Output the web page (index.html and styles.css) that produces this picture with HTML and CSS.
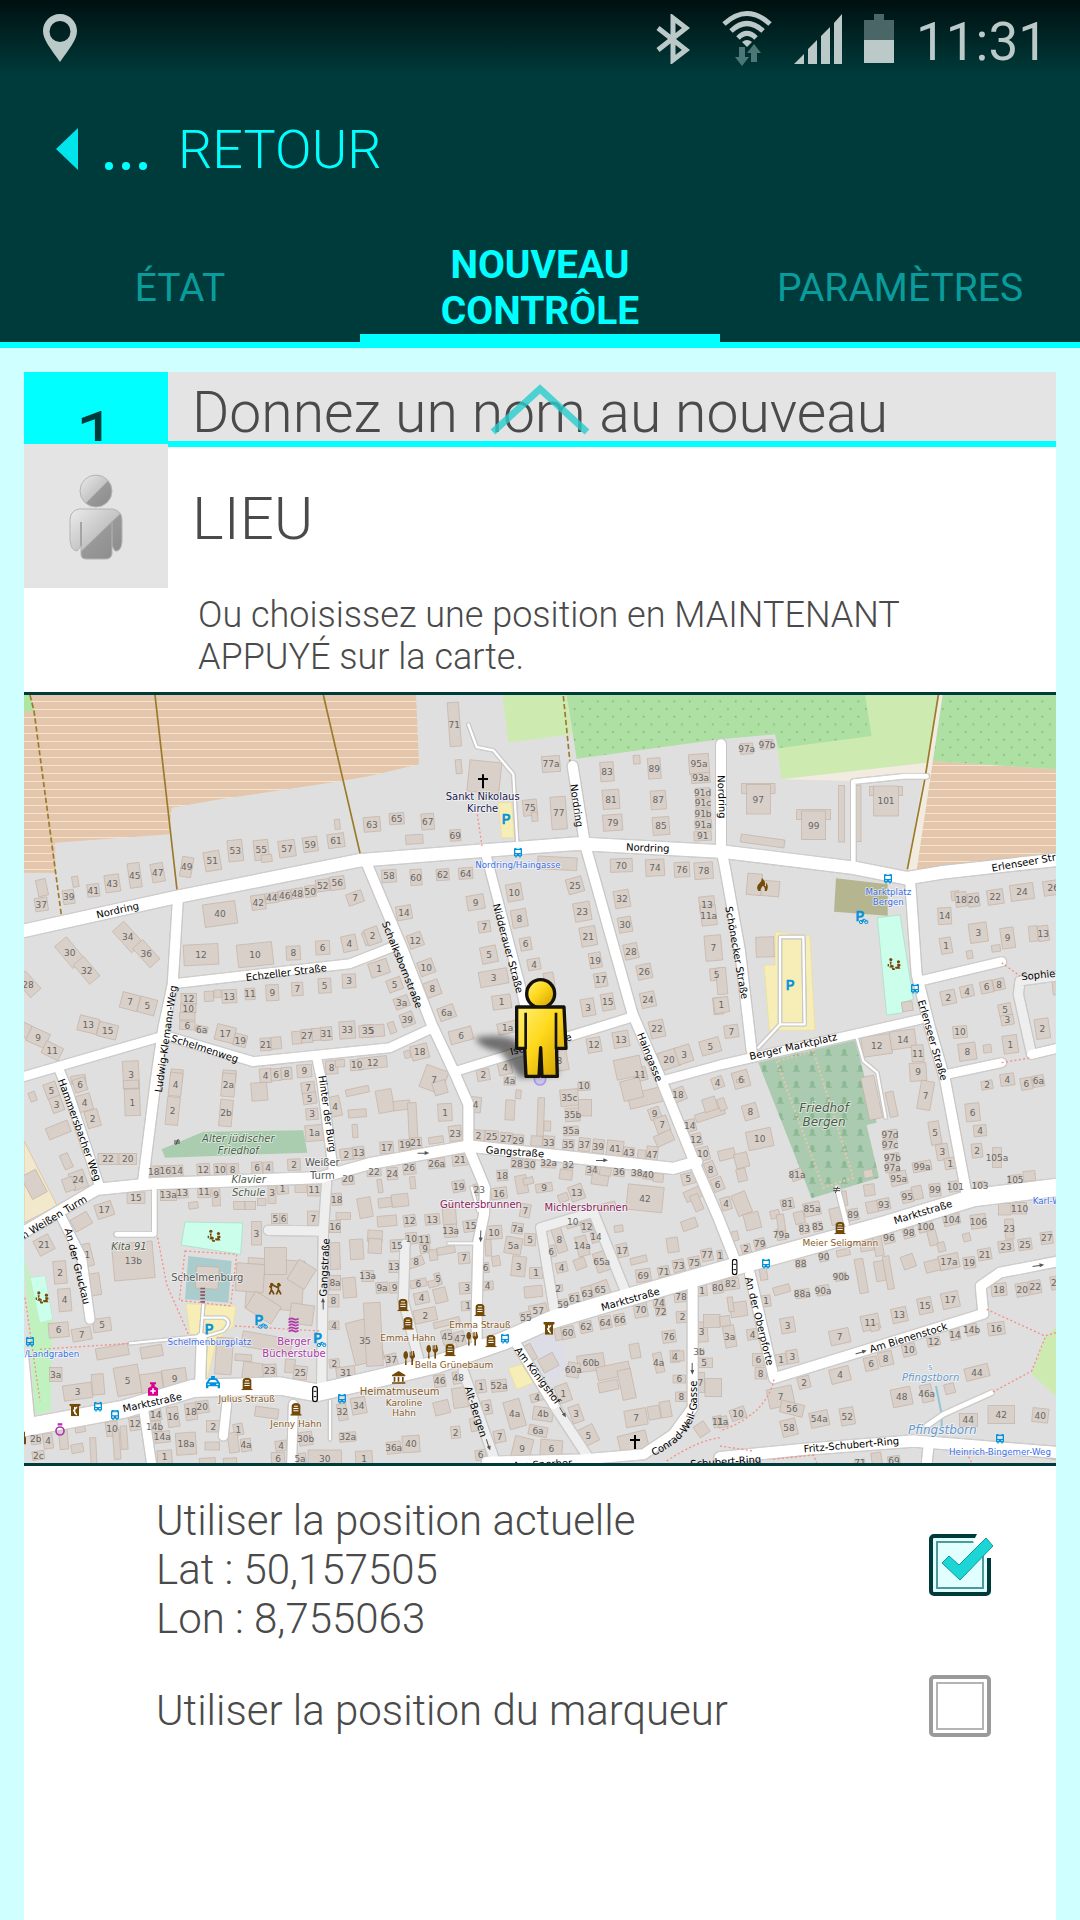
FILE: index.html
```html
<!DOCTYPE html>
<html lang="fr">
<head>
    <meta charset="UTF-8">
    <meta name="viewport" content="width=device-width, initial-scale=1.0">
    <title>Nouveau contrôle</title>
    <link rel="stylesheet" href="styles.css">
</head>
<body>
    <header class="header">
        <div class="status-bar">
            <svg class="icon-pin" viewBox="0 0 36 48" width="36" height="48"><path fill="#bcc9c9" fill-rule="evenodd" d="M18 0C8 0 1 8 1 17c0 9 8 18 17 31C27 35 35 26 35 17 35 8 28 0 18 0zm0 7a10.500 10.500 0 1 1 0 21 10.500 10.500 0 0 1 0-21z"/></svg>
            <div class="status-icons">
                <svg viewBox="0 0 34 50" width="34" height="50"><path fill="none" stroke="#bcc9c9" stroke-width="5" d="M2 14L30 36 17 46V4L30 14 2 36"/></svg>
                <svg viewBox="0 0 50 56" width="50" height="56">
                    <g fill="none" stroke="#bcc9c9" stroke-width="5"><path d="M2 14Q25-7 48 14"/><path d="M9 21Q25 6 41 21"/><path d="M16 28Q25 19 34 28"/></g>
                    <path fill="#bcc9c9" d="M20 32q5-4 10 0l-5 5z"/>
                    <path fill="#4d7676" d="M17 37h6v10h4l-7 9-7-9h4zM29 52V43h-4l7-9 7 9h-4v9z"/>
                </svg>
                <svg viewBox="0 0 48 50" width="48" height="50"><path fill="#bcc9c9" d="M0 50L10 40V50zM14 50V35l9-9V50zM27 50V22l9-9V50zM40 50V9l8-9V50z"/></svg>
                <svg viewBox="0 0 30 50" width="30" height="50"><path fill="#4a6666" d="M10 0h10v6h10v20H0V6h10z"/><path fill="#bcc9c9" d="M0 26h30v23H0z"/></svg>
                <span class="clock">11:31</span>
            </div>
        </div>
        <a class="back" href="#">
            <svg viewBox="0 0 92 42" width="92" height="42"><path fill="#00e5ec" d="M0 21L22 0V42z"/><g fill="#00ffff"><circle cx="53" cy="38" r="4"/><circle cx="70" cy="38" r="4"/><circle cx="87" cy="38" r="4"/></g></svg>
            <span>RETOUR</span>
        </a>
        <nav class="tabs">
            <a class="tab" href="#">ÉTAT</a>
            <a class="tab active" href="#">NOUVEAU CONTRÔLE</a>
            <a class="tab" href="#">PARAMÈTRES</a>
        </nav>
    </header>

    <main class="card">
        <svg class="scroll-up" viewBox="0 0 100 52" width="100" height="52"><path fill="none" stroke="#28cccc" stroke-opacity=".8" stroke-width="7" d="M3 48L50 5 97 48"/></svg>
        <section class="intro">
            <div class="side">
                <div class="step">1</div>
                <div class="person">
                    <svg viewBox="0 0 54 86" width="54" height="86">
                        <defs>
                            <linearGradient id="silver" x1="0" y1="0" x2="1" y2="1"><stop offset="0" stop-color="#ececec"/><stop offset=".52" stop-color="#c4c4c4"/><stop offset=".54" stop-color="#999"/><stop offset="1" stop-color="#8a8a8a"/></linearGradient>
                        </defs>
                        <g fill="url(#silver)" stroke="#b4b4b4" stroke-width="1">
                            <circle cx="27" cy="17" r="16"/>
                            <path d="M10 35H44Q53 37 53 46V68Q52 78 46 77L43 72V80Q42 85 37 85H17Q12 85 12 80V72L8 77Q2 77 1 66V46Q1 37 10 35z"/>
                            <path fill="none" stroke="#a5a5a5" stroke-width="2" d="M12 72V48M43 72V48"/>
                        </g>
                    </svg>
                </div>
            </div>
            <div class="texts">
                <h1 class="title">Donnez un nom au nouveau</h1>
                <h2 class="place">LIEU</h2>
                <p class="hint">Ou choisissez une position en MAINTENANT APPUYÉ sur la carte.</p>
            </div>
        </section>

        <svg class="map" viewBox="12 12 3096 2304">
            <defs>
                <pattern id="farm" width="24" height="24" y="6" patternUnits="userSpaceOnUse"><rect width="24" height="24" fill="#e3c6ab"/><rect width="24" height="3" y="0" fill="#f6e4cc"/></pattern>
                <pattern id="orchard" width="46" height="46" patternUnits="userSpaceOnUse"><rect width="46" height="46" fill="#aedfa3"/><circle cx="8" cy="8" r="3" fill="#83b97c"/><circle cx="31" cy="31" r="3" fill="#83b97c"/></pattern>
                <pattern id="graves" width="48" height="48" patternUnits="userSpaceOnUse"><rect width="48" height="48" fill="#aacbaf"/><path d="M14 38h22v-3h-5V22q-6-9-12 0v13h-5z" fill="#8cb894"/></pattern>
                <linearGradient id="gold" x1="0" y1="0" x2="1" y2="1"><stop offset="0" stop-color="#fff07a"/><stop offset=".45" stop-color="#ffd91c"/><stop offset="1" stop-color="#cc9a00"/></linearGradient>
                <filter id="soft" x="-50%" y="-50%" width="200%" height="200%"><feGaussianBlur stdDeviation="9"/></filter>
                <symbol id="bus" viewBox="0 0 24 30"><path fill="#0092da" fill-rule="evenodd" d="M4 0H20Q24 0 24 5V26H20V30H16V26H8V30H4V26H0V5Q0 0 4 0zM4 7V16H20V7zM7 2V4H17V2zM4 19V23H8V19zM16 19V23H20V19z"/></symbol>
                <symbol id="stone" viewBox="0 0 34 38"><path fill="#734a08" fill-rule="evenodd" d="M0 34H4V8Q6 0 17 0 28 0 30 8V34H34V38H0zM11 8V11H23V8zM9 15V18H25V15zM9 22V25H25V22z"/></symbol>
                <symbol id="food" viewBox="0 0 36 42"><path fill="#734a08" d="M8 0q8 2 7 16-1 7-5 8l1 18H6l1-18Q1 22 1 13 1 3 8 0zM20 2h3v12h2V0h3v14h2V0h3v14l3-12v16l-6 6v18h-5V24l-5-6z"/></symbol>
                <symbol id="phone" viewBox="0 0 34 38"><path fill="#734a08" d="M0 0H34V6L29 8V38H5V8L0 6z"/><path fill="none" stroke="#fff" stroke-width="4" d="M23 10L13 21 22 34M16 10V30"/></symbol>
                <symbol id="bike" viewBox="0 0 30 20"><g fill="none" stroke="#0092da" stroke-width="3"><circle cx="7" cy="13" r="5"/><circle cx="23" cy="13" r="5"/><path d="M7 13L13 5H19L23 13M13 5L16 13"/></g></symbol>
                <symbol id="seesaw" viewBox="0 0 42 42"><g fill="#734a08"><circle cx="11" cy="5" r="5"/><circle cx="35" cy="12" r="5"/><path d="M7 12H14L12 21 20 24V30H6L10 22zM1 18L6 20 5 27 0 26zM31 19H40L38 28 42 34H26L24 28 32 27zM13 30L24 33V38H16zM36 18L42 20V26H38z"/></g></symbol>
                <symbol id="lights" viewBox="0 0 18 50"><rect x="2" y="2" width="14" height="46" rx="7" fill="#fff" stroke="#111" stroke-width="4"/><path fill="none" stroke="#111" stroke-width="3" d="M5 17H13M5 33H13"/></symbol>
                <symbol id="arrow" viewBox="0 0 36 14"><path fill="#555" d="M0 6H22V1L36 7 22 13V9H0z"/></symbol>
                <g id="lanes">
                    <path stroke-width="38" d="M0 722L460 620 1020 508 1400 478 1670 458 2110 482 2500 530 2660 562 2760 545 3120 505"/>
                    <path stroke-width="52" d="M0 2212L310 2155 520 2092 780 2085 890 2105 1050 2068 1250 2020 1450 1950 1590 1888 1750 1840 2150 1725 2600 1600 2860 1520 3120 1488"/>
                    <path stroke-width="34" d="M0 1630L230 1495 400 1478 900 1460 1050 1418 1345 1365 1960 1432 2030 1412M2100 2300L2350 2275 2680 2250 3120 2285"/>
                    <path stroke-width="30" d="M474 620L458 880 430 1010 407 1170 368 1480M1035 505L1150 780 1235 1000 1310 1160 1345 1240V1370L1395 1490 1392 1570 1375 1650 1370 1870V1950M1658 225L1695 460 1838 970 1925 1170 2030 1430 2095 1580 2150 1720M2103 160V470L2115 530 2160 780 2195 1080M2670 565L2690 850 2730 1010 2775 1165 2840 1510M2190 1750L2262 2062 2890 1868 2882 1785 2940 1745 3120 1710M2018 1790V2150L1960 2230 1870 2290 1690 2305 1400 2312M540 2090L545 1940M10 2000L28 2190M2726 2260L2720 2320"/>
                    <path stroke-width="27" d="M460 878L990 818 1125 765M0 1160L430 1035M440 1035L700 1112 1110 1070 1235 1012M890 1100L905 1170 940 1440M115 1130L140 1190 240 1490M125 1580L185 1700 210 1885M370 2150L395 2320M620 2140L610 2235M820 2140L815 2320M1395 480L1500 880 1540 1060M1310 1140L1830 980M1925 1170L2100 1122 2700 985M2700 870L2945 812M2780 1150L2945 1115M3035 1090L3120 1070M1490 1960L1600 2140"/>
                    <path stroke-width="14" d="M403 1490V1630H290M2500 515V272L2650 256H2720M2720 2205L2770 2170 2915 2105"/>
                    <path stroke-width="7" d="M545 1935L330 1957M550 1840L542 1940M550 1880H610Q640 1890 610 1920L545 1940M930 2130V2245M1345 100L1370 168 1420 178 1480 250 1492 460M2280 738H2350L2354 1000H2280zM2280 1000L2215 1070M2510 1040L2530 1110 2572 1145 2597 1280M1355 1490L1375 1560M1285 1657H1370"/>
                    <path stroke-width="14" d="M2452 1490L2480 1600"/>
                </g>
                <g id="minor">
                    <path stroke-width="28" d="M920 1475L910 1620 905 2080M905 1620L745 1618M1155 1660L1150 1830 1195 2000M1330 2040L1425 2310M1600 2140L1705 2300M1605 1870L1562 1610 1720 1563 1820 1810M3110 855L3000 870 2995 910 3035 1090"/>
                </g>
                <path id="conrad" d="M1900 2295Q2025 2240 2032 2130V2060"/>
            </defs>

            <rect x="0" y="0" width="3120" height="2330" fill="#e0dfdf"/>
            <g class="areas">
                <path fill="url(#farm)" d="M12 12H1188L1197 220 1050 255 950 272 600 325 455 350 448 430 105 455 107 545H12zM2735 210L3108 235V485L2690 537 2715 330z"/>
                <path fill="#aee6a0" d="M12 12H32L42 60 12 62z"/>
                <path fill="#cdebb0" d="M1448 12H1640L1655 130 1465 155zM2530 12H2758L2720 215 2285 265 2270 165z"/>
                <path fill="url(#orchard)" d="M1640 12H2535L2555 135 2275 172 2265 130 2100 145 1670 203zM2765 12H3108V235L2735 210z"/>
                <path fill="#f2ebe0" d="M2285 265L2720 215 2758 12H2768L2690 537H2660L2710 262 2640 250 2500 270z"/>
                <path fill="url(#graves)" d="M2215 1115L2505 1048 2570 1295 2540 1302 2577 1460 2375 1522z"/>
                <path fill="#a9cdae" d="M425 1375L550 1322 850 1318 862 1385 435 1400z"/>
                <path fill="#cbffec" stroke="#a0dcc0" stroke-width="2" d="M2572 680L2640 672 2680 925 2645 935 2648 965 2600 972zM495 1593L668 1596 662 1690 484 1662zM32 1760L75 1755 97 1885 60 1894z"/>
                <path fill="#bff2bf" d="M12 1700L32 1760 60 1894 97 1885 92 2160 45 2170z"/>
                <path fill="#cbffec" d="M32 1760L75 1755 97 1885 60 1894z"/>
                <path fill="#cdebb0" d="M3075 1940L3108 1910V2115L3035 2050z"/>
                <path fill="#f6eeb6" stroke="#e8dc98" stroke-width="2" d="M2265 722L2370 735 2385 1018H2248L2232 822H2265zM1435 335H1475L1483 440H1445zM498 1838L648 1845 640 1905 590 1950 560 2070 550 2065 556 1940 510 1930zM1465 2032L1505 2020 1540 2075 1490 2095z"/>
                <path fill="#f2e9cc" stroke="#d8b79a" stroke-width="2" d="M12 1350L112 1545 12 1595z"/>
                <path fill="#b5b690" d="M2448 562L2603 580V674L2442 662z"/>
                <path fill="#aacccc" d="M505 1695L635 1710 625 1835 495 1825z"/>
                <path fill="#dddde8" d="M1050 2025L1175 2000 1190 2040 1050 2060zM1530 1950L1595 1920 1630 1970 1640 2030 1600 2075 1570 2035zM1025 2050H1050V2070H1025z"/>
                <path fill="none" stroke="#8fc7d0" stroke-width="6" d="M2748 2085L2765 2170V2210"/>
            </g>
            <g class="tracks">
                <path d="M405 12L472 605M910 12L1022 495M2755 12L2715 262 2662 535"/>
                <path stroke-dasharray="16 8" d="M30 12L42 60 125 680M1630 15L1650 215"/>
            </g>
            <g id="buildings"></g>
            <g class="casing"><use href="#lanes"/><use href="#minor"/></g>
            <g class="lane-minor"><use href="#minor"/></g>
            <g class="lane"><use href="#lanes"/></g>
            <path class="foot" d="M413 1640L440 1780 505 1930M495 1680L650 1690 632 1845 478 1828zM645 1905L900 1920M60 1975L330 1957M15 1820L60 2130M2945 815L3000 855M2945 1115L3035 1100M2900 1855L3075 1935 3108 1925M3075 1940L3035 2040 2915 2105M2262 2065Q2240 2170 2100 2220M1372 370L1386 465M1940 2310Q2030 2250 2100 2240M2100 2265L2200 2280M2260 2305L2380 2292 2390 2315M2840 2285L2855 2315"/>
            <path class="foot wide" d="M2270 1110L2410 1490 2500 1460 2380 1080 2270 1110"/>
            <path fill="none" stroke="#934" stroke-width="14" stroke-dasharray="5 5" stroke-opacity=".8" d="M548 1790V1838"/>

            <g id="numbers" class="number"></g>

            <g class="street">
                <text transform="translate(295 668) rotate(-13)">Nordring</text>
                <text transform="translate(800 855) rotate(-7)">Echzeller Straße</text>
                <text transform="translate(551 1083) rotate(18)">Schelmenweg</text>
                <text transform="translate(448 1045) rotate(-82)">Ludwig-Klemann-Weg</text>
                <text transform="translate(1137 825) rotate(68)">Schalksbornstraße</text>
                <text transform="translate(1454 775) rotate(75)">Nidderauer Straße</text>
                <text transform="translate(1660 345) rotate(82)">Nordring</text>
                <text transform="translate(1883 481) rotate(2)">Nordring</text>
                <text transform="translate(2095 318) rotate(88)">Nordring</text>
                <text transform="translate(1880 1102) rotate(68)">Haingasse</text>
                <text transform="translate(1565 1070) rotate(-14)">Isenerstraße</text>
                <text transform="translate(2140 787) rotate(80)">Schönecker Straße</text>
                <text transform="translate(2322 1077) rotate(-13)">Berger Marktplatz</text>
                <text class="start" transform="translate(2917 542) rotate(-10)">Erlenseer Straße</text>
                <text transform="translate(2728 1050) rotate(74)">Erlenseer Straße</text>
                <text class="start" transform="translate(3005 868) rotate(-6)">Sophie-Scholl</text>
                <text transform="translate(169 1320) rotate(70)">Hammersbacher Weg</text>
                <text transform="translate(912 1270) rotate(82)">Hinter der Burg</text>
                <text transform="translate(94 1595) rotate(-31)">Am Weißen Turm</text>
                <text transform="translate(162 1728) rotate(76)">An der Gruckau</text>
                <text transform="translate(924 1730) rotate(-87)">Gangstraße</text>
                <text transform="translate(399 2145) rotate(-12)">Marktstraße</text>
                <text transform="translate(1484 1393) rotate(4)">Gangstraße</text>
                <text transform="translate(1834 1835) rotate(-16)">Marktstraße</text>
                <text transform="translate(1545 2060) rotate(53)">Am Königshof</text>
                <text transform="translate(1358 2165) rotate(72)">Alt-Bergen</text>
                <text transform="translate(1568 2330) rotate(-3)">Am Sperber</text>
                <text transform="translate(2712 1573) rotate(-17)">Marktstraße</text>
                <text transform="translate(2208 1893) rotate(76)">An der Oberpforte</text>
                <text transform="translate(2668 1950) rotate(-17)">Am Bienenstock</text>
                <text transform="translate(2495 2272) rotate(-5)">Fritz-Schubert-Ring</text>
                <text transform="translate(2118 2322) rotate(-4)">Schubert-Ring</text>
                <text class="start"><textPath href="#conrad">Conrad-Weil-Gasse</textPath></text>
            </g>
            <g class="place-name">
                <text class="navy" x="1388" y="328">Sankt Nikolaus</text><text class="navy" x="1388" y="364">Kirche</text>
                <text x="907" y="1426">Weißer</text><text x="907" y="1465">Turm</text>
                <text x="562" y="1770">Schelmenburg</text>
                <text class="violet" x="822" y="1962">Berger</text><text class="violet" x="822" y="1998">Bücherstube</text>
                <text class="wine" x="1383" y="1550">Güntersbrunnen</text><text class="wine" x="1699" y="1559">Michlersbrunnen</text>
                <text class="brown" x="1139" y="2112">Heimatmuseum</text>
                <text class="brown small" x="1152" y="2145">Karoline</text><text class="brown small" x="1152" y="2175">Hahn</text>
                <text class="brown small" x="680" y="2133">Julius Strauß</text><text class="brown small" x="828" y="2208">Jenny Hahn</text>
                <text class="brown small" x="1164" y="1951">Emma Hahn</text><text class="brown small" x="1380" y="1912">Emma Strauß</text>
                <text class="brown small" x="1302" y="2030">Bella Grünebaum</text><text class="brown small" x="2461" y="1666">Meier Seligmann</text>
                <text class="dark" x="655" y="1352">Alter jüdischer</text><text class="dark" x="655" y="1388">Friedhof</text>
                <text class="dark" x="686" y="1477">Klavier</text><text class="dark" x="686" y="1514">Schule</text>
                <text class="dark" x="327" y="1676">Kita 91</text>
                <text class="dark big" x="2412" y="1263">Friedhof</text><text class="dark big" x="2412" y="1305">Bergen</text>
                <text class="blue" x="1494" y="532">Nordring/Haingasse</text>
                <text class="blue" x="2605" y="613">Marktplatz</text><text class="blue" x="2605" y="642">Bergen</text>
                <text class="blue" x="568" y="1963">Schelmenburgplatz</text><text class="blue end" x="178" y="1999">Marktstraße/Landgraben</text>
                <text class="blue start" x="3038" y="1538">Karl-Weingärtner</text><text class="blue" x="2940" y="2292">Heinrich-Bingemer-Weg</text>
                <text class="water" x="2732" y="2070">Pfingstborn</text><text class="water big" x="2767" y="2228">Pfingstborn</text>
                <text class="water upright" x="2731" y="2036">5</text>
            </g>
            <g class="parking">
                <text x="1458" y="400">P</text><text x="2310" y="898">P</text><text x="2519" y="689">P</text>
                <text x="567" y="1930">P</text><text x="716" y="1902">P</text><text x="892" y="1957">P</text>
            </g>
            <g class="icons">
                <use href="#bus" x="1482" y="470" width="24" height="30"/><use href="#bus" x="2592" y="548" width="24" height="30"/><use href="#bus" x="2673" y="878" width="24" height="30"/>
                <use href="#bus" x="18" y="1937" width="24" height="30"/><use href="#bus" x="222" y="2132" width="24" height="30"/><use href="#bus" x="273" y="2157" width="24" height="30"/>
                <use href="#bus" x="954" y="2108" width="24" height="30"/><use href="#bus" x="1443" y="1928" width="24" height="30"/><use href="#bus" x="2226" y="1703" width="24" height="30"/><use href="#bus" x="2928" y="2228" width="24" height="30"/>
                <use href="#stone" x="664" y="2060" width="34" height="38"/><use href="#stone" x="811" y="2136" width="34" height="38"/><use href="#stone" x="1132" y="1823" width="34" height="38"/><use href="#stone" x="1147" y="1878" width="34" height="38"/>
                <use href="#stone" x="1363" y="1838" width="34" height="38"/><use href="#stone" x="1396" y="1931" width="34" height="38"/><use href="#stone" x="1273" y="1958" width="34" height="38"/><use href="#stone" x="2443" y="1592" width="34" height="38"/>
                <use href="#food" x="1338" y="1922" width="36" height="42"/><use href="#food" x="1218" y="1961" width="36" height="42"/><use href="#food" x="1149" y="1980" width="36" height="42"/>
                <use href="#phone" x="1570" y="1893" width="34" height="38"/><use href="#phone" x="148" y="2138" width="34" height="38"/>
                <use href="#bike" x="2516" y="680" width="30" height="20"/><use href="#bike" x="714" y="1894" width="30" height="20"/><use href="#bike" x="890" y="1949" width="30" height="20"/>
                <use href="#seesaw" x="2602" y="800" width="40" height="42"/><use href="#seesaw" x="562" y="1615" width="40" height="42"/><use href="#seesaw" x="46" y="1800" width="40" height="42"/>
                <use href="#lights" x="876" y="2084" width="18" height="50"/><use href="#lights" x="2135" y="1703" width="18" height="50"/>
                <use href="#arrow" x="1192" y="1379" width="36" height="14"/><use href="#arrow" x="1728" y="1401" width="36" height="14"/>
                <use href="#arrow" transform="translate(1390 1618) rotate(92)" width="36" height="14"/><use href="#arrow" transform="translate(2024 2015) rotate(90)" width="36" height="14"/>
                <use href="#arrow" transform="translate(902 1856) rotate(-90)" width="36" height="14"/><use href="#arrow" transform="translate(1625 2145) rotate(58)" width="36" height="14"/>
                <use href="#arrow" transform="translate(1406 2242) rotate(72)" width="36" height="14"/><use href="#arrow" transform="translate(2504 1982) rotate(-17)" width="36" height="14"/><use href="#arrow" transform="translate(3036 1719) rotate(-8)" width="36" height="14"/>
                <path fill="none" stroke="#000" stroke-width="6" d="M1389 250V292M1374 264H1404M1845 2232V2274M1830 2247H1860"/>
                <path fill="#734a08" d="M2225 560q14 12 9 24 1 4 4 0l1-10q8 14 1 26h-6q3-9-5-16-9 8-7 16h-7q-9-14 4-24 8-7 6-16z"/>
                <path fill="none" stroke="#734a08" stroke-width="5" d="M748 1788L758 1782 770 1788 782 1782M754 1784V1798L748 1810M756 1798L762 1810M775 1784V1798L769 1810M777 1798L783 1810"/><circle cx="755" cy="1780" r="5" fill="#734a08"/><circle cx="776" cy="1780" r="5" fill="#734a08"/>
                <path fill="#734a08" d="M1116 2052L1136 2040 1156 2052V2056H1116zM1121 2058h5v14h-5zM1133 2058h5v14h-5zM1146 2058h5v14h-5zM1116 2074H1156V2078H1116z"/>
                <path fill="none" stroke="#ac39ac" stroke-width="5" d="M806 1886q8-6 15-2t15-1M806 1895q8-6 15-2t15-1M806 1904q8-6 15-2t15-1M806 1913q8-6 15-2t15-1M806 1922q8-6 15-2t15-1"/>
                <path fill="#da0092" d="M390 2074H408V2080H404V2086L414 2092V2114H384V2092L394 2086V2080H390z"/><path stroke="#fff" stroke-width="5" d="M399 2092V2108M391 2100H407"/>
                <g fill="none" stroke="#ac39ac"><circle cx="120" cy="2220" r="12" stroke-width="5"/><path stroke-width="7" d="M113 2200H127"/></g>
                <path fill="#0092da" fill-rule="evenodd" d="M558 2076L568 2062H573V2055H585V2062H590L600 2076V2092H593V2086H565V2092H558zM566 2074H592L586 2067H572zM563 2078V2082H569V2078zM589 2078V2082H595V2078z"/>
                <path fill="#734a08" d="M12 2222h3v14l3 4v20h-6z"/>
                <path fill="none" stroke="#444" stroke-width="3" d="M462 1350H480M462 1356H480M475 1344L467 1362M2440 1492H2460M2440 1499H2460M2454 1486L2446 1506"/>
                <circle cx="1560" cy="1165" r="17" fill="#cdc6f2" stroke="#a99be6" stroke-width="5"/>
            </g>
            <g class="marker">
                <path fill="#000" fill-opacity=".5" filter="url(#soft)" d="M1365 1040Q1430 1028 1480 1045L1600 1130 1620 1150 1500 1160 1440 1082Q1380 1072 1365 1040z"/>
                <g fill="url(#gold)" stroke="#14120a" stroke-width="10" stroke-linejoin="round">
                    <circle cx="1562" cy="908" r="42"/>
                    <path d="M1494 948H1632L1638 1072H1610V1090L1612 1156H1566L1562 1070 1557 1156H1518L1514 1072H1490V948z"/>
                </g>
                <path fill="none" stroke="#14120a" stroke-width="8" d="M1517 965V1075M1608 965V1075"/>
            </g>
        </svg>

        <form class="options">
            <label class="option" for="usePosition">
                <span>Utiliser la position actuelle<br>Lat : 50,157505<br>Lon : 8,755063</span>
                <span class="check">
                    <input type="checkbox" id="usePosition" checked>
                    <svg viewBox="0 0 64 64" width="64" height="64"><path fill="#fff" d="M48 0H64V24H56V18L44 8z"/><path fill="#1cd6d6" stroke="#0d9a9a" stroke-width="1" d="M13 29L20 22 30 31 57 4 64 12 31 46z"/></svg>
                </span>
            </label>
            <label class="option" for="useMarker">
                <span>Utiliser la position du marqueur</span>
                <span class="check"><input type="checkbox" id="useMarker"></span>
            </label>
        </form>
    </main>
    <script src="map.js"></script>
</body>
</html>
```
FILE: styles.css
```css
* {
    box-sizing: border-box;
}
body {
    margin: 0;
    min-height: 100vh;
    display: flex;
    flex-direction: column;
    font-family: Roboto, sans-serif;
    font-weight: 300;
    color: #4a4a4a;
    background-color: #d0ffff;
}
svg {
    display: block;
}
a {
    text-decoration: none;
}
h1, h2, p {
    margin: 0;
    font-weight: 300;
}

/* header */
.header {
    background: linear-gradient(#001010, #003b3b 76px);
    color: #00ffff;
}
.status-bar {
    display: flex;
    justify-content: space-between;
    height: 76px;
    padding: 14px 32px 0 42px;
}
.status-icons {
    display: flex;
    gap: 22px;
}
.status-icons svg:nth-child(2) {
    margin: -4px 0 0 10px;
}
.clock {
    font-size: 53px;
    line-height: 56px;
    font-weight: 400;
    color: #bcc9c9;
}
.back {
    display: flex;
    align-items: center;
    gap: 30px;
    height: 146px;
    padding: 0 56px;
    color: #00ffff;
    font-size: 54px;
}
.tabs {
    display: grid;
    grid-template-columns: repeat(3, 1fr);
    height: 126px;
    border-bottom: 6px solid #00ffff;
}
.tab {
    display: flex;
    align-items: center;
    justify-content: center;
    padding: 10px 40px 0;
    text-align: center;
    font-size: 39px;
    line-height: 46px;
    font-weight: 400;
    color: #0a9c9c;
}
.tab.active {
    font-weight: 700;
    color: #00ffff;
    border-bottom: 10px solid #00ffff;
    padding-top: 20px;
}

/* card */
.card {
    position: relative;
    flex: 1;
    margin: 24px 24px 0;
    background-color: #fff;
}
.scroll-up {
    position: absolute;
    top: 12px;
    left: 50%;
    transform: translateX(-50%);
}
.intro {
    display: grid;
    grid-template-columns: 144px 1fr;
}
.step {
    height: 72px;
    padding-top: 31px;
    overflow: hidden;
    background-color: #00ffff;
    border-bottom: 3px solid #00ffff;
    color: #003b3b;
    font-size: 72px;
    line-height: 72px;
    font-weight: 400;
    text-align: center;
}
.person {
    display: flex;
    justify-content: center;
    height: 144px;
    padding-top: 30px;
    background-color: #e4e4e4;
}
.title {
    height: 75px;
    padding-left: 24px;
    background-color: #e4e4e4;
    border-bottom: 6px solid #00ffff;
    font-size: 57px;
    line-height: 82px;
    white-space: nowrap;
}
.place {
    padding: 37px 24px 0;
    font-size: 60px;
    line-height: 70px;
}
.hint {
    padding: 40px 130px 14px 30px;
    font-size: 36px;
    line-height: 42px;
}
.options {
    padding: 30px 65px 0 132px;
}
.option {
    display: flex;
    align-items: center;
    justify-content: space-between;
    font-size: 42px;
    line-height: 49px;
    margin-bottom: 32px;
}
.check {
    display: grid;
    width: 62px;
    margin-bottom: 8px;
}
.check > * {
    grid-area: 1 / 1;
}
.check svg {
    pointer-events: none;
}
.check input {
    appearance: none;
    width: 62px;
    height: 62px;
    margin: 0;
    border: 4px solid #9a9a9a;
    border-radius: 5px;
    outline: 2px solid #b4b4b4;
    outline-offset: -9px;
    background-color: #fff;
}
.check input:checked {
    border-color: #003b3b;
    outline-color: #4f9a9a;
    background-color: #e2ffff;
}
.check input:not(:checked) + svg {
    display: none;
}

/* map */
.map {
    width: 100%;
    height: auto;
    border-top: 3px solid #003b3b;
    border-bottom: 3px solid #003b3b;
    box-sizing: content-box;
    font-family: "DejaVu Sans", sans-serif;
    font-weight: 400;
}
.casing, .lane, .lane-minor {
    fill: none;
    stroke-linecap: round;
    stroke-linejoin: round;
}
.casing {
    stroke: #bdbdbd;
    filter: drop-shadow(2px 0 0 #c9c7c5) drop-shadow(-2px 0 0 #c9c7c5) drop-shadow(0 2px 0 #c9c7c5) drop-shadow(0 -2px 0 #c9c7c5);
}
.lane {
    stroke: #fff;
}
.lane-minor {
    stroke: #eee;
}
.tracks path {
    fill: none;
    stroke: #9b7a2b;
    stroke-width: 5;
}
.foot {
    fill: none;
    stroke: #f58f88;
    stroke-width: 4;
    stroke-dasharray: 6 7;
}
.foot.wide {
    stroke: #dccab0;
    stroke-width: 7;
}
.house {
    fill: #d9d0c9;
    stroke: #c2b1a4;
    stroke-width: 2;
}
.number {
    font-size: 27px;
    fill: #666;
    text-anchor: middle;
}
.street {
    font-size: 30px;
    fill: #000;
    text-anchor: middle;
}
.place-name {
    font-size: 30px;
    fill: #555;
    text-anchor: middle;
    stroke: #fff;
    stroke-opacity: .6;
    stroke-width: 5;
    paint-order: stroke;
}
.start { text-anchor: start; }
.end { text-anchor: end; }
.navy { fill: #1a1a50; }
.violet { fill: #ac39ac; }
.wine { fill: #8b1a5c; }
.brown { fill: #8a5a1e; }
.small { font-size: 27px; }
.dark {
    fill: #4b5a4b;
    font-style: italic;
}
.big { font-size: 36px; }
.blue {
    fill: #3a6ee8;
    font-size: 26px;
}
.water {
    fill: #6699cc;
    font-style: italic;
}
.upright {
    font-style: normal;
    font-size: 20px;
}
.parking {
    font-size: 44px;
    font-weight: 400;
    fill: #0092da;
    stroke: #0092da;
    stroke-width: 2;
    text-anchor: middle;
}
```
FILE: map.js
```js
// Buildings by map tile: "label x y width height angle", "-" for a house without a number
const tiles = [
    { x: 0, y: 0, houses: `- 66 590 30 50 -12;37 64 640 38 40 -8;- 166 572 18 32 -10;39 146 618 34 42 -8;41 220 598 36 38 -6;43 277 577 44 52 -8;45 344 553 36 74 -8;47 413 545 38 56 -10;49 500 528 34 60 10;51 577 510 48 58 -10;53 646 479 44 64 -6;55 724 477 44 60 -6;- 740 502 32 22 -6;57 801 473 50 50 -8;59 871 460 44 44 -8;61 948 449 50 42 -8;- 952 400 16 30 -6;63 1056 400 50 44 -5
        40 600 669 98 68 -8;42 715 634 42 44 -8;44 755 621 38 30 -8;46 794 613 38 30 -8;48 832 607 34 30 -8;50 871 601 32 34 -8;52 908 583 40 36 -8;56 952 576 44 40 -8;7 1005 621 48 36 -20;34 323 738 86 46 48;36 379 788 78 40 48;30 149 785 86 46 50;32 200 838 76 40 50;28 24 880 70 42 48
        12 543 791 104 62 -3;10 705 791 106 68 -6;8 820 786 42 42 -3;6 908 770 42 42 -3;4 988 757 44 48 -12;- 1045 740 30 40 -20;3 987 870 40 42 -3;5 914 884 38 44 -3;7 832 894 34 40 -3;9 757 905 38 48 -3;11 690 909 30 34 -3;13 628 916 44 40 -3;- 567 916 28 30 -3;- 593 908 22 22 -3;7 330 932 54 48 15;5 382 945 52 48 15;13 205 1001 60 46 14;15 263 1019 58 44 14;9 54 1039 62 46 24;11 97 1079 56 40 26;- 10 1015 40 40 24
        12 506 923 46 32 0;10 505 952 46 26 0;- 502 976 46 22 0;6 502 1003 46 26 3;6a 545 1015 36 20 12;17 616 1028 58 48 14;19 661 1048 38 36 14;21 737 1060 32 38 -3;- 769 1056 30 36 -5;- 830 1040 28 38 -4;27 861 1035 34 40 -4;- 890 1030 28 36 -4;31 919 1028 34 40 -4;33 982 1017 48 52 -4;35 1043 1020 34 38 -4;3 333 1152 48 84 -3;- 470 1155 36 40 5;- 175 1165 44 24 -8;4 737 1154 36 42 -4;6 768 1151 30 36 -4;8 800 1147 32 36 -4;9 853 1140 44 38 -4;8 935 1129 36 40 -4;- 960 1117 28 22 -4;10 1010 1122 38 32 -4;- 628 1155 40 34 4` },
    { x: 1050, y: 0, houses: `71 253 100 34 132 -4;- 266 227 18 42 -5;- 343 258 96 94 6;77a 543 219 54 48 -4;83 711 242 40 58 -4;- 800 206 20 26 -4;89 853 232 38 62 -4;95a 987 219 60 60 -4;93a 992 261 56 30 -4;91d 998 305 44 28 -3;91c 999 336 44 28 -3;91b 999 368 46 28 -3;91a 1000 401 50 28 -3;91 998 435 52 28 -3;81 723 325 50 58 -4;87 865 327 46 56 -4;79 728 395 58 48 -4;85 873 405 50 54 -4;75 480 350 42 48 -6;- 494 377 18 28 -6;77 566 366 46 98 -4;65 80 383 44 34 -4;67 173 392 38 48 -4;69 256 433 32 34 -4;- 133 445 52 28 -3
        58 57 555 44 38 -4;60 138 559 34 48 -4;62 218 551 38 34 -4;64 287 547 42 34 -4;70 754 523 66 40 -2;74 855 530 56 50 -3;76 936 536 46 44 -3;78 1001 539 56 50 -4;- 562 517 118 38 3;9 317 634 52 44 -10;10 433 604 46 52 -10;25 615 583 48 46 -16;14 102 665 46 42 -10;7 343 707 36 34 -8;8 448 682 46 54 -10;23 637 662 50 56 -10;32 756 624 46 52 -10;13 1011 640 46 48 -6;11a 1016 673 46 60 -6;30 765 701 40 46 -10;12 136 748 44 42 -20;2 8 735 42 50 -20;6 467 759 34 38 -10;21 655 736 48 58 -10;5 357 791 48 50 -12;4 492 820 38 34 -10;19 676 808 36 46 -10;28 783 781 42 46 -12;7 1030 771 50 76 -5;26 823 842 44 44 -12;1 27 832 58 44 -18;10 169 829 46 44 -20;3 371 860 86 46 -10;17 692 867 38 42 -10;- 537 865 30 40 -10;5 74 881 44 38 -20;8 187 893 46 46 -20;5 1040 850 40 36 -5;3a 95 934 44 34 -20;1 395 933 56 42 -8;15 713 933 38 50 -10;3 654 949 40 52 -10;24 834 926 44 46 -12;- 1045 945 30 50 -5;6a 230 965 50 40 -20;39 112 985 40 40 -20;22 861 1014 44 52 -12;6 273 1033 70 40 -15;1a 413 1010 60 34 -12;5 5 1020 76 36 -4;- 66 1010 20 34 -20;12 672 1062 42 44 -10;13 753 1045 48 48 -10;18 149 1083 52 44 -14;- 112 1090 18 22 -14;12 8 1115 86 34 -6;20 897 1105 58 54 -18;3 942 1090 46 52 -18;5 1021 1066 60 44 -16;8 568 1110 50 60 -10;4 405 1131 40 40 -12;2 340 1152 38 34 -10;11 810 1150 40 40 -14;- 775 1130 80 60 -12;7 192 1165 70 70 20` },
    { x: 2100, y: 0, houses: `97a 80 173 38 32 -4;97b 141 160 38 28 -4;- 115 292 100 30 0;97 115 325 72 88 0;- 281 371 102 30 0;99 281 403 72 86 0;- 365 368 18 170 0;- 415 368 16 168 0;- 498 300 100 28 0;101 498 330 74 90 0;- 128 450 132 24 8;- 145 592 66 46 5;- 103 580 44 64 5;- 135 768 54 60 -2;14 674 675 40 50 -3;- 706 614 24 28 -8;18 723 625 34 44 -8;20 761 627 34 40 -8;22 826 618 48 44 -8;24 906 603 70 48 -8;26 1000 590 60 44 -8;3 775 725 54 58 -8;1 678 764 34 48 -10;9 863 741 40 62 -8;13 970 727 32 46 -8;- 940 728 26 46 -5;- 828 772 26 20 -8;- 749 791 18 24 -10;2 685 919 44 42 -12;4 741 901 40 34 -12;6 800 888 38 36 -12;8 837 880 34 34 -12;5 855 956 38 36 -12;3 862 987 38 30 -10;10 720 1023 42 36 -5;- 802 1073 24 24 -8;1 871 1060 44 54 -8;8 742 1082 52 52 -8;2 967 1013 42 60 -8;- 562 946 32 28 -8;12 470 1063 88 60 -8;14 549 1045 76 54 -8;11 593 1087 36 50 -4;9 594 1143 50 54 -4;4 862 1166 42 36 -8;7 34 1021 42 38 -8;1 4 942 44 46 -8;6 63 1165 48 50 -16;- 5 870 30 80 -5;- 1008 890 20 42 -5` },
    { x: 0, y: 1170, houses: `5 94 28 38 46 -20;6 180 12 38 40 -18;3 110 70 36 46 -20;- 38 47 20 28 -20;4 194 65 42 50 -16;1 337 64 46 80 -2;- 333 10 46 24 -2;2 218 113 40 52 -16;- 115 147 70 36 -22;- 42 310 50 76 -28;4 467 10 38 70 6;2 458 90 38 84 6;2a 625 12 40 70 5;2b 618 96 38 80 5;- 718 32 48 54 -4;7 864 20 40 34 -8;5 869 52 40 34 -8;3 876 99 36 34 -4;4 945 76 34 60 -12;- 1012 30 70 20 -12;- 1012 97 54 24 -4;- 1005 150 16 40 -4;1a 883 156 54 48 -5;22 264 234 60 34 0;20 323 234 52 34 0;- 139 241 26 46 -24;24 175 297 46 54 -20;- 146 310 32 40 -20;18 401 271 34 32 -3;16 436 270 32 32 -3;14 472 269 34 32 -3;12 550 266 38 36 -3;10 600 265 36 34 -3;8 638 265 36 34 -3;6 711 261 32 36 -3;4 744 261 30 36 -3;2 822 251 38 34 -3;2 979 220 38 34 -6;13 1016 215 34 36 -6;20 984 293 36 36 -4
        15 348 350 54 34 0;13a 445 342 48 34 0;13 487 335 34 32 -4;11 552 332 38 36 -3;9 588 340 24 70 -3;- 520 373 28 20 -8;- 658 373 34 24 0;- 691 373 32 24 0;- 725 363 26 20 0;3 756 335 24 64 0;1 788 323 34 32 -5;- 843 320 36 28 0;11 883 325 42 40 0;18 950 355 30 36 -4;17 253 387 52 44 -18;- 184 422 56 40 -30;7 880 412 34 44 0;5 766 413 24 30 0;6 791 413 22 30 0;16 945 437 34 36 0;- 970 405 44 20 0;3 709 457 30 70 0;21 72 492 50 50 -28;- 1010 505 40 60 -4;- 1035 380 40 60 -10;1 202 522 28 68 -14;- 225 610 32 66 -8;2 120 574 38 68 -5;4 134 657 38 68 -5;6 116 747 60 44 -5;7 185 760 58 38 -10;5 246 732 54 40 -8;13b 340 540 122 110 -5;- 562 590 68 66 3;- 765 610 170 150 4;- 690 590 84 84 4;- 766 540 66 80 0;- 845 580 60 70 32;- 730 680 90 60 32;- 845 700 70 60 8;- 945 525 30 80 -2;8a 945 605 34 44 0;- 988 620 40 60 -5;13a 1043 585 34 34 0;8 940 659 34 38 0;4 942 733 30 26 0;35 1035 780 90 130 -14;- 277 812 98 34 -10;- 395 812 66 34 -10;- 612 825 50 110 4;- 670 830 50 20 4;3a 107 880 38 42 0;3 173 932 86 46 -8;- 234 910 36 62 -5;5 323 898 74 86 -10;- 395 905 66 56 -8;9 464 893 72 58 -8;- 700 870 64 50 8;- 740 785 150 46 10;23 749 870 40 40 -4;- 810 855 30 40 4;25 841 875 40 40 6;2 943 847 30 26 -6;31 977 874 56 34 -8
        20 547 978 38 36 -8;18 513 992 34 50 -8;16 459 1008 34 60 -8;14 407 1001 34 34 -8;12 345 1028 34 40 -8;14b 404 1037 38 34 -6;10 276 1043 36 44 -8;14a 427 1068 46 34 -6;4 84 1080 28 46 -8;2b 47 1073 28 34 -8;- 130 1065 26 80 -5;- 180 1040 30 28 -10;- 172 1102 36 26 -10;- 220 1110 18 80 -3;- 290 1090 20 90 -4;- 312 1070 20 70 -4;2c 55 1123 36 26 -8;18a 498 1088 60 66 -4;2 580 1036 42 34 0;1 655 1045 28 34 -12;4a 678 1092 30 38 -8;- 577 1095 44 24 0;- 640 1085 30 60 -8;4 783 1094 34 30 -8;- 740 995 70 30 8;34 1016 974 44 50 -10;32 967 993 28 50 -10;30b 857 1073 40 40 -8;32a 983 1068 50 28 -5;30 914 1132 100 50 0;5a 840 1134 36 34 -4;6 774 1132 40 36 -3;1 1032 1132 50 44 -3;1 434 1128 44 40 -4;- 562 1142 48 22 -3;- 630 1142 40 22 -3` },
    { x: 1050, y: 1170, houses: `- 45 60 48 68 -10;- 95 73 50 28 -6;- 128 120 26 110 -3;1 225 94 42 52 -3;4 317 71 32 46 6;- 210 20 40 40 -16;4a 419 0 34 24 0;- 445 40 16 26 5;- 420 87 28 60 3;35c 598 50 54 50 -5;10 642 15 36 26 -3;35b 608 101 44 40 -3;- 645 80 40 50 0;35a 603 150 44 28 -3;- 512 110 20 120 2;- 532 135 20 30 2;- 830 50 110 44 -14;- 785 25 60 60 -14;18 924 42 46 40 -22;9 854 97 34 34 -20;7 876 131 40 48 -20;- 882 172 56 34 -24;4 1043 5 34 34 -20;- 1020 100 90 24 -18;- 1020 70 40 40 -18;14 959 134 36 36 -14;12 978 176 34 36 -14;10 998 219 40 40 -14
        23 256 157 38 46 -8;17 50 200 40 36 -4;19 105 192 38 32 -4;21 138 186 34 32 -4;- 198 177 44 20 -8;2 326 163 36 32 4;25 365 168 40 38 4;27 409 174 36 38 4;29 445 178 32 34 4;- 500 180 34 30 4;33 536 184 34 38 4;35 595 192 34 34 4;37 643 191 34 40 6;39 685 196 34 42 6;41 735 203 50 48 6;43 776 215 34 32 6;47 846 220 34 48 6;- 815 220 24 26 6;22 12 271 42 30 -4;24 67 278 32 36 -4;26 118 260 38 40 -6;26a 200 247 50 30 -6;21 270 237 46 34 -6;- 30 315 14 40 -8;- 128 305 16 36 -6;18 397 283 32 32 -4;28 441 247 34 28 4;30 479 250 32 28 4;32a 536 246 42 28 4;32 595 250 30 26 4;- 588 281 38 30 8;34 666 267 36 32 6;- 690 295 50 34 8;- 706 272 34 24 8;36 747 272 34 28 6;38 800 275 30 24 6;40 834 282 30 26 6;- 865 290 30 26 6;5 955 293 40 34 -14;8 1022 265 30 46 -22;6 1043 310 34 40 -22
        19 266 316 38 34 -10;23 328 325 34 34 -8;16 387 337 48 34 -8;- 90 358 50 38 -6;- 45 365 40 28 -8;- 455 310 34 54 -10;- 475 300 30 20 -14;9 522 320 50 26 -8;13 620 335 42 46 -20;- 580 350 30 24 -20;42 825 352 108 76 6;- 968 340 50 32 -24;- 980 365 26 50 -24;12 119 419 36 34 -8;13 187 415 44 32 -6;- 51 420 58 32 -5;- 15 465 44 34 3;13a 242 449 38 40 -4;- 238 400 40 60 -4;15 302 435 44 34 -8;7 466 389 30 40 10;7a 442 442 34 32 8;10 372 454 48 40 -4;5 480 476 34 36 4;5a 430 494 50 50 10;8 568 477 30 76 -18;12 650 436 34 32 -14;10 608 421 44 34 -18;14a 637 495 34 60 -14;14 678 468 30 32 -14;17 757 508 32 40 -12;- 746 443 26 20 -8;- 710 375 54 18 -14;- 958 430 46 30 -20;- 908 492 34 44 -8;10 124 472 34 34 -4;11 163 476 34 26 -8;9 165 504 30 24 -8;15 81 494 40 36 -3;6 543 511 28 34 -14;- 190 522 24 32 -8;- 228 508 54 22 -10;7 282 531 34 34 -5;- 355 500 18 50 -3;- 378 540 24 30 -10;- 15 495 40 44 3;8 138 543 46 28 -20;13 72 557 30 36 0;3 446 556 42 60 6;4 575 559 34 30 -12;1 498 576 38 32 0;6 347 560 20 30 -4;- 630 548 34 32 -20;65a 695 542 40 60 -18;6 145 607 50 24 -12;5 204 594 18 36 -16;- 190 608 30 20 -14;9 74 620 30 32 -4;9a 36 620 36 32 -4;4 353 614 34 26 -4;3 291 621 46 34 -4;4 155 651 44 34 -12;- 211 643 38 44 -14;- 490 632 54 34 -6;2 564 622 28 20 -8;- 806 537 50 20 -14;69 820 583 44 38 -8;71 881 572 34 32 -12;73 926 554 34 36 -12;75 973 544 34 34 -12;77 1011 522 34 36 -12;65 691 625 54 44 -20;63 652 638 30 44 -14;61 614 652 30 30 -12;59 579 671 30 32 -12;1 294 674 40 28 -4;2 166 703 68 40 -12;57 505 690 54 40 -12;55 468 710 32 34 -12;- 230 725 80 18 -14
        - 10 760 50 190 -3;45 232 768 32 44 -14;47 270 774 30 44 -14;37 64 837 34 36 -14;60 593 755 40 36 -12;62 648 738 36 34 -12;64 706 724 36 38 -12;66 749 716 32 34 -12;70 812 687 40 44 -10;74 867 664 34 26 -8;72 872 691 30 26 -8;78 933 647 40 32 -6;1 996 628 30 34 -6;80 1043 620 30 34 -8;2 938 708 38 34 -4;76 897 767 40 36 -8;3 995 753 36 60 -4;- 1025 720 50 40 0;60b 663 845 80 50 -8;- 562 745 20 66 -10;- 795 810 30 44 -10;4 915 826 28 36 -4;3b 987 813 30 18 -4;5 1002 845 52 28 0;4a 866 845 26 60 -12;6 928 894 38 24 0;8 934 947 34 28 0;7 991 905 24 60 0;- 1030 920 50 54 0;- 730 870 100 40 -12;- 770 910 40 90 -12;- 715 915 60 30 -12;- 535 845 50 44 -28;- 480 815 26 50 -28;60a 610 867 36 44 10;52a 387 914 46 36 -6;48 265 890 34 36 -8;46 209 900 34 36 -8;1 333 916 30 38 -8;- 270 950 44 60 -8;3 351 979 28 42 -10;- 215 980 46 40 -14;4 501 949 40 24 -16;4a 434 999 50 84 -16;4b 519 999 60 40 8;1 580 937 40 54 -20;3 618 999 34 52 -20;5 655 1063 50 54 -26;7 798 1010 66 50 -10;- 852 995 36 40 -10;- 887 985 32 48 -10;2 257 1054 28 36 -6;- 318 1030 34 40 -10;7 389 1066 34 36 -12;6a 504 1050 56 30 12;9 456 1104 56 70 14;6 544 1103 66 52 4;36a 71 1100 42 36 -6;40 123 1089 52 50 -4;6 332 1122 32 30 -8;- 790 1085 86 58 -14;- 995 1045 36 38 -34;11 1043 1022 26 34 -10;- 925 825 34 30 -3` },
    { x: 2100, y: 1170, houses: `8 91 92 44 46 -16;10 119 174 76 56 -12;- 20 220 50 30 -14;- 65 238 40 44 -14;- 65 282 28 38 -14;81a 231 281 36 32 -20;- 6 70 22 36 -20;- 62 0 24 10 0;- 448 327 32 34 -8;- 445 278 28 24 -10;- 455 50 40 130 -12;- 515 70 24 76 -12;7 617 43 40 86 10;2 801 12 34 26 -10;6 919 8 34 36 -10;6a 955 0 34 34 -10;5 645 156 32 70 -10;3 667 213 36 48 -10;1 691 247 34 34 -10;6 758 94 42 54 -6;4 780 149 38 34 -6;2 771 209 32 42 -6;105a 831 230 26 60 0;97d 510 160 44 26 -8;97c 510 190 44 28 -8;97b 517 230 42 26 -8;97a 517 260 42 26 -8;95a 536 292 50 40 -14;99a 606 256 56 30 -10;99 645 327 34 38 -6;101 706 316 38 32 -6;103 780 314 32 24 -6;105 885 297 40 30 -6;- 928 285 36 30 -6;95 562 347 34 36 -12;- 592 335 30 40 -12;93 491 370 38 34 -12;- 456 378 34 34 -12;89 399 401 32 34 -12
        4 18 368 30 38 -16;- 65 368 44 66 -22;- 97 420 46 50 -14;81 202 369 38 32 -14;- 165 400 28 24 -14;79a 184 460 28 34 -8;- 183 425 22 50 -8;85a 276 384 50 40 -12;- 238 410 30 36 -14;83 253 444 28 28 -12;85 293 437 28 28 -12;- 352 405 42 50 -12;- 374 352 14 44 -8;79 119 488 32 30 -14;2 78 503 28 26 -14;- 45 465 20 28 -12;- 130 575 22 44 -8;1 0 525 16 34 -6;104 695 416 50 32 -14;100 617 437 44 30 -14;98 566 455 34 32 -14;96 507 471 32 32 -14;- 638 470 26 46 -14;- 664 498 22 28 -14;106 775 421 46 42 -8;110 899 382 42 34 0;- 854 385 38 34 0;23 868 444 26 60 -3;- 740 469 22 24 -14;27 980 471 36 36 -8;25 915 490 40 34 -8;23 858 496 46 34 -8;21 794 520 40 34 -10;17a 687 542 60 44 -12;- 637 555 44 34 -14;19 748 545 36 34 -8;- 565 542 38 40 -20;88 242 548 30 24 -8;90 311 527 28 28 -12;90b 363 587 34 24 -8;90a 309 628 38 30 -8;88a 247 638 42 26 -8;- 185 626 50 24 -16;- 424 585 26 104 -10;- 480 570 30 60 -10;- 505 575 20 100 -10;- 440 490 40 40 -10;- 370 515 40 20 -12;- 475 495 26 60 -10;82 32 609 50 34 -8;- 56 685 50 44 -8;- 32 670 16 44 -8;1 138 660 28 34 -8;3 203 733 42 46 -10;3a 29 766 34 66 -10;- 15 720 30 30 -8;4 98 760 34 32 -8;7 359 767 60 44 -12;11 451 724 54 46 -12;- 464 740 26 20 -12;13 538 702 46 44 -12;15 615 674 42 48 -12;17 691 657 52 48 -12;18 837 626 46 38 -6;20 907 626 38 40 -10;22 946 618 34 40 -10;24 1010 605 36 40 -10;16 829 743 50 38 -8;14b 755 746 34 34 -12;14 705 760 30 34 -12;12 641 782 38 26 -12;10 567 807 40 36 -14;8 497 833 42 42 -12;6 453 848 40 40 -12;1 183 836 32 34 -10;3 217 827 34 40 -10;6 115 836 34 38 0;8 122 877 34 34 0;2 252 904 36 36 -14;4 360 882 60 44 -14;44 771 874 72 38 -14;7 182 948 76 58 -12;56 216 983 70 36 14;58 207 1040 46 50 -14;10 54 998 46 34 -20;1a 8 1023 30 32 -14;54a 298 1014 56 46 -12;52 382 1006 42 52 -10;48 545 948 60 54 -12;46a 620 937 34 52 -12;- 689 923 30 30 -14;44 745 1017 54 40 0;42 844 1001 80 54 0;40 961 1003 48 42 6;69 522 1140 36 30 -8;71 420 1146 30 20 -8;- 470 1135 30 40 -8;- 1000 1125 40 20 10` }
];

let shapes = '';
let labels = '';

tiles.forEach(tile => {
    tile.houses.split(/[;\n]/).forEach(line => {
        const [label, x, y, w, h, angle] = line.trim().split(' ');
        const cx = tile.x + Number(x);
        const cy = tile.y + Number(y);
        shapes += `<rect class="house" x="${cx - w / 2}" y="${cy - h / 2}" width="${w}" height="${h}" transform="rotate(${angle} ${cx} ${cy})"/>`;
        if (label !== '-') {
            labels += `<text x="${cx}" y="${cy + 10}">${label}</text>`;
        }
    });
});

document.getElementById('buildings').innerHTML = shapes;
document.getElementById('numbers').innerHTML = labels;
```
